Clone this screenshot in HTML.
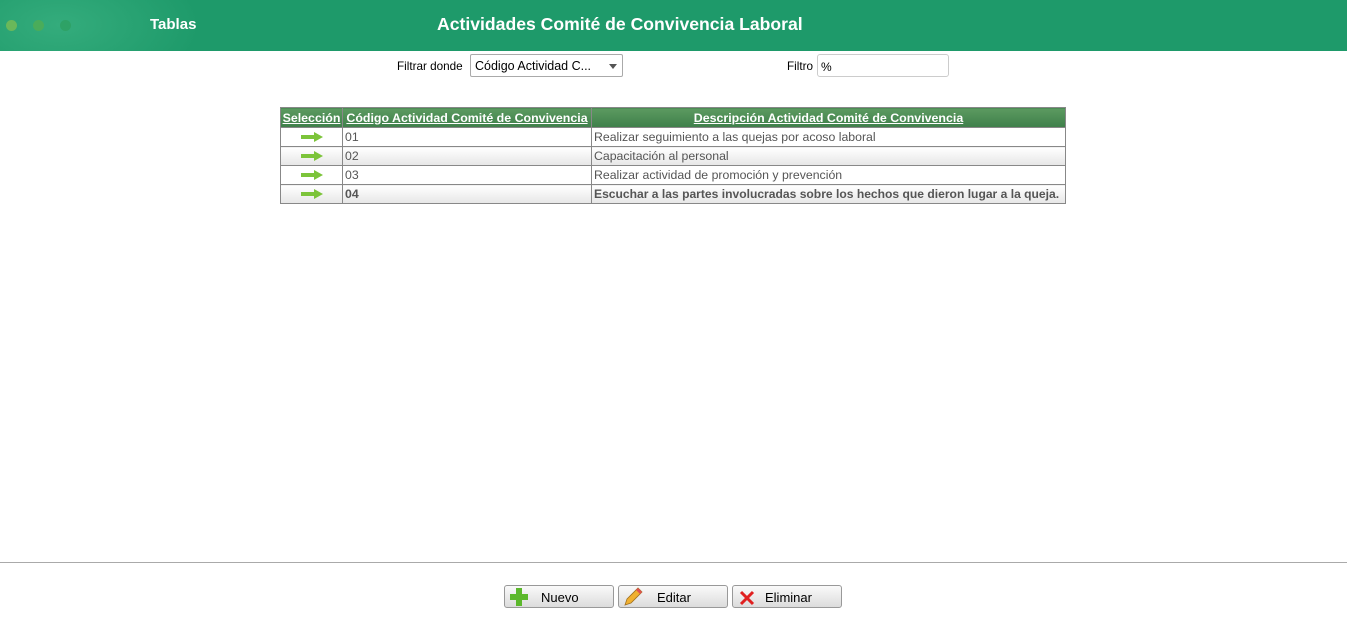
<!DOCTYPE html><html><head><meta charset="utf-8"><style>
body{margin:0;width:1347px;height:639px;position:relative;background:#fff;font-family:"Liberation Sans",sans-serif;overflow:hidden}
.hdr{position:absolute;left:0;top:0;width:1347px;height:51px;background:radial-gradient(ellipse 140px 70px at 60px 25px,#34ac7c,#1e9a6a 100%);}
.dot{position:absolute;top:20px;width:11px;height:11px;border-radius:50%}
.t{position:absolute;color:#fff;font-weight:bold;font-family:"Liberation Sans",sans-serif}
.lbl{position:absolute;font-size:11.7px;color:#000}
table{position:absolute;left:280px;top:107px;border-collapse:collapse;font-size:12.3px;width:786px;table-layout:fixed}
th{background:linear-gradient(#5c9a60,#3e7f4a);color:#fff;height:19px;padding:0 1px;border:1px solid #888;text-decoration:underline;font-size:12.4px;white-space:nowrap;overflow:hidden}
td{border:1px solid #888;height:18px;padding:0 2px;color:#555;white-space:nowrap;overflow:hidden}
tr.g td{background:linear-gradient(#fff,#e6e6e6)}
.ar{display:block;margin:0 auto;width:22px;height:10px}
.btn{position:absolute;top:585px;height:23px;width:108px;border:1px solid #999;border-radius:3px;background:linear-gradient(#fafafa,#dcdcdc);font-size:13px;box-sizing:border-box}
.btn span{position:absolute;top:4px}
</style></head><body>
<div class="hdr"></div>
<div class="dot" style="left:6px;background:#6ab85a"></div>
<div class="dot" style="left:33px;background:#4aac5a"></div>
<div class="dot" style="left:60px;background:#2ea266"></div>
<div class="t" style="left:150px;top:16px;font-size:15px">Tablas</div>
<div class="t" style="left:437px;top:14px;font-size:17.6px">Actividades Comité de Convivencia Laboral</div>
<div class="lbl" style="left:397px;top:60px">Filtrar donde</div>
<div style="position:absolute;left:470px;top:54px;width:153px;height:23px;border:1px solid #aaa;border-radius:2px;box-sizing:border-box;font-size:12.5px;padding:4px 4px">Código Actividad C...<span style="position:absolute;right:5px;top:9px;border:4px solid transparent;border-top:5px solid #555"></span></div>
<div class="lbl" style="left:787px;top:60px">Filtro</div>
<div style="position:absolute;left:817px;top:54px;width:132px;height:23px;border:1px solid #ccc;border-radius:3px;box-sizing:border-box;font-size:12px;padding:5px 3px">%</div>
<table>
<colgroup><col style="width:62px"><col style="width:249px"><col></colgroup>
<tr><th>Selección</th><th>Código Actividad Comité de Convivencia</th><th>Descripción Actividad Comité de Convivencia</th></tr>
<tr><td><svg class="ar" viewBox="0 0 22 10"><path d="M0 3h13V0l9 5-9 5V7H0z" fill="#7cc43a"/></svg></td><td>01</td><td>Realizar seguimiento a las quejas por acoso laboral</td></tr>
<tr class="g"><td><svg class="ar" viewBox="0 0 22 10"><path d="M0 3h13V0l9 5-9 5V7H0z" fill="#7cc43a"/></svg></td><td>02</td><td>Capacitación al personal</td></tr>
<tr><td><svg class="ar" viewBox="0 0 22 10"><path d="M0 3h13V0l9 5-9 5V7H0z" fill="#7cc43a"/></svg></td><td>03</td><td>Realizar actividad de promoción y prevención</td></tr>
<tr class="g"><td><svg class="ar" viewBox="0 0 22 10"><path d="M0 3h13V0l9 5-9 5V7H0z" fill="#7cc43a"/></svg></td><td style="font-weight:bold">04</td><td style="font-weight:bold;font-size:12.1px">Escuchar a las partes involucradas sobre los hechos que dieron lugar a la queja.</td></tr>
</table>
<div style="position:absolute;left:0;top:562px;width:1347px;height:1px;background:#aaa"></div>
<div class="btn" style="left:504px;width:110px"><svg style="position:absolute;left:5px;top:2px" width="18" height="18" viewBox="0 0 18 18"><path d="M6 0h6v6h6v6h-6v6H6v-6H0V6h6z" fill="#5cb82c"/></svg><span style="left:36px">Nuevo</span></div>
<div class="btn" style="left:618px;width:110px"><svg style="position:absolute;left:4px;top:1px" width="20" height="20" viewBox="0 0 20 20"><path d="M2 18l2-6L15 1l4 4L8 16z" fill="#f0b030" stroke="#a07020" stroke-width=".8"/><path d="M15 1l4 4-2 2-4-4z" fill="#e05050"/></svg><span style="left:38px">Editar</span></div>
<div class="btn" style="left:732px;width:110px"><svg style="position:absolute;left:6px;top:4px" width="16" height="16" viewBox="0 0 16 16"><path d="M2 2l12 12M14 2L2 14" stroke="#e02020" stroke-width="3"/></svg><span style="left:32px">Eliminar</span></div>
</body></html>
